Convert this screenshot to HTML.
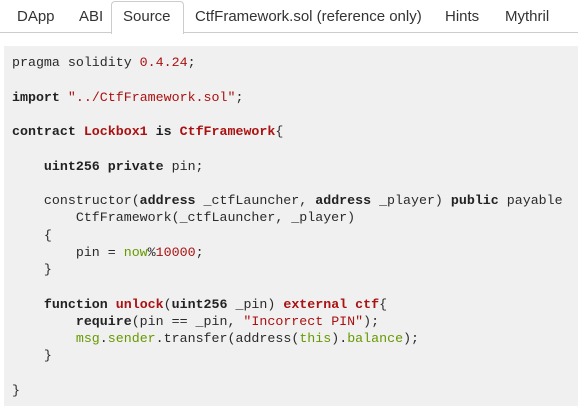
<!DOCTYPE html>
<html><head><meta charset="utf-8"><style>
body{margin:0;width:578px;height:406px;background:#fff;overflow:hidden;font-family:"Liberation Sans",sans-serif;}
.tabs{position:absolute;left:0;top:0;width:578px;height:32px;border-bottom:1px solid #ccc;}
.t{position:absolute;top:8px;font-size:15px;color:#333;line-height:18px;}
.act{position:absolute;left:111px;top:1px;width:71px;height:32px;border:1px solid #ccc;border-bottom:none;border-radius:4px 4px 0 0;background:#fff;}
pre{position:absolute;left:4px;top:46px;width:574px;height:360px;margin:0;background:#f0f0f0;padding:8px 0 0 8px;box-sizing:border-box;font-family:"Liberation Mono",monospace;font-size:13.3px;line-height:17.25px;color:#2a2a2a;}
b{font-weight:bold;color:#222}
.r{color:#a11;}
.rb{color:#a11;font-weight:bold}
.g{color:#690;}
</style></head><body>
<div class="tabs">
<div class="act"></div>
<span class="t" style="left:17px">DApp</span>
<span class="t" style="left:79px">ABI</span>
<span class="t" style="left:123px">Source</span>
<span class="t" style="left:195px">CtfFramework.sol (reference only)</span>
<span class="t" style="left:445px">Hints</span>
<span class="t" style="left:505px">Mythril</span>
</div>
<pre>pragma solidity <span class="r">0.4.24</span>;

<b>import</b> <span class="r">"../CtfFramework.sol"</span>;

<b>contract</b> <span class="rb">Lockbox1</span> <b>is</b> <span class="rb">CtfFramework</span>{

    <b>uint256</b> <b>private</b> pin;

    constructor(<b>address</b> _ctfLauncher, <b>address</b> _player) <b>public</b> payable
        CtfFramework(_ctfLauncher, _player)
    {
        pin = <span class="g">now</span>%<span class="r">10000</span>;
    }

    <b>function</b> <span class="rb">unlock</span>(<b>uint256</b> _pin) <span class="rb">external</span> <span class="rb">ctf</span>{
        <b>require</b>(pin == _pin, <span class="r">"Incorrect PIN"</span>);
        <span class="g">msg</span>.<span class="g">sender</span>.transfer(address(<span class="g">this</span>).<span class="g">balance</span>);
    }

}</pre>
</body></html>
